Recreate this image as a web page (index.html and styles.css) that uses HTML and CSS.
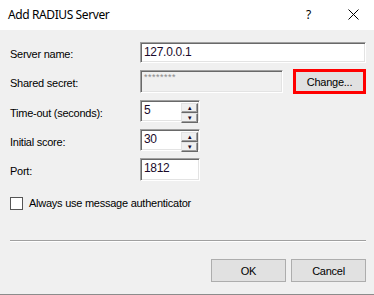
FILE: index.html
```html
<!DOCTYPE html>
<html lang="en">
<head>
    <meta charset="UTF-8">
    <title>Add RADIUS Server</title>
    <link rel="stylesheet" href="styles.css">
</head>
<body>
    <div class="dialog">
        <div class="titlebar">
            <span class="title">Add RADIUS Server</span>
            <span class="help">?</span>
            <span class="close">
                <svg width="11" height="11" viewBox="0 0 11 11">
                    <path d="M0.5 0.5 L10.5 10.5 M10.5 0.5 L0.5 10.5" stroke="#000" stroke-width="1" fill="none"/>
                </svg>
            </span>
        </div>

        <div class="content">
            <div class="row row-name">
                <label class="field-label">Server name:</label>
                <div class="textbox wide">127.0.0.1</div>
            </div>

            <div class="row row-secret">
                <label class="field-label">Shared secret:</label>
                <div class="textbox secret">********</div>
                <button class="btn btn-change">Change...</button>
            </div>

            <div class="row">
                <label class="field-label">Time-out (seconds):</label>
                <div class="textbox spin">
                    <span class="value">5</span>
                    <span class="spin-buttons">
                        <span class="spin-btn">&#9652;</span>
                        <span class="spin-btn">&#9662;</span>
                    </span>
                </div>
            </div>

            <div class="row">
                <label class="field-label">Initial score:</label>
                <div class="textbox spin">
                    <span class="value">30</span>
                    <span class="spin-buttons">
                        <span class="spin-btn">&#9652;</span>
                        <span class="spin-btn">&#9662;</span>
                    </span>
                </div>
            </div>

            <div class="row">
                <label class="field-label">Port:</label>
                <div class="textbox short">1812</div>
            </div>

            <div class="check-row">
                <span class="checkbox"></span>
                <span>Always use message authenticator</span>
            </div>

            <div class="separator"></div>

            <div class="actions">
                <button class="btn">OK</button>
                <button class="btn">Cancel</button>
            </div>
        </div>
    </div>
</body>
</html>
```

FILE: styles.css
```css
body {
    margin: 0;
    padding: 0;
    background: #f0f0f0;
    font-family: "Liberation Sans", Arial, sans-serif;
    font-size: 11px;
    letter-spacing: -0.25px;
    color: #000;
}

.dialog {
    width: 374px;
    height: 295px;
    background: #f0f0f0;
    box-sizing: border-box;
    border-bottom: 1px solid #8c8c8c;
    overflow: hidden;
}

.titlebar {
    height: 30px;
    background: #fff;
    display: flex;
    align-items: center;
    padding-left: 8px;
}

.title {
    font-family: "Noto Sans", "Open Sans", sans-serif;
    font-size: 12px;
    letter-spacing: -0.4px;
    flex: 1;
    padding-bottom: 1px;
}

.help {
    font-family: "Noto Sans", sans-serif;
    font-size: 12px;
    width: 42px;
    padding-bottom: 1px;
}

.close {
    width: 26px;
    display: flex;
    padding-bottom: 1px;
}

.content {
    padding: 12px 8px 0 10px;
}

.row {
    display: flex;
    align-items: center;
    height: 22px;
    margin-bottom: 7px;
}

.row-name {
    height: 21px;
    margin-bottom: 6px;
}

.row-secret {
    height: 25px;
    margin-bottom: 6px;
}

.field-label {
    width: 130px;
    padding-top: 3px;
}

.textbox {
    box-sizing: border-box;
    height: 100%;
    background: #fff;
    border: 1px solid;
    border-color: #a0a0a0 #fff #fff #a0a0a0;
    box-shadow: inset 1px 1px 0 #696969, inset -1px -1px 0 #e3e3e3;
    padding: 2px 3px 0;
    font-size: 12px;
    letter-spacing: -0.3px;
    color: #1a0a2a;
}

.wide {
    width: 226px;
}

.secret {
    width: 143px;
    height: 23px;
    background: #f0f0f0;
    color: #8a8a8a;
    font-size: 9px;
    letter-spacing: 0.5px;
    padding-top: 1px;
}

.short {
    width: 60px;
    height: 23px;
}

.spin {
    width: 60px;
    display: flex;
    justify-content: space-between;
    padding: 2px 1px 2px 3px;
}

.spin-buttons {
    display: flex;
    flex-direction: column;
    width: 17px;
}

.spin-btn {
    flex: 1;
    box-sizing: border-box;
    background: #f0f0f0;
    border: 1px solid;
    border-color: #e3e3e3 #696969 #696969 #e3e3e3;
    box-shadow: inset -1px -1px 0 #a0a0a0;
    font-size: 7px;
    line-height: 8px;
    text-align: center;
}

.btn {
    box-sizing: border-box;
    width: 75px;
    height: 23px;
    background: #e1e1e1;
    border: 1px solid #adadad;
    font-family: "Liberation Sans", Arial, sans-serif;
    font-size: 11px;
    letter-spacing: -0.25px;
    color: #000;
    padding: 0;
}

.btn-change {
    width: 73px;
    height: 25px;
    margin-left: 10px;
    border: 3px solid #ff0000;
}

.check-row {
    display: flex;
    align-items: center;
    gap: 6px;
    margin-top: 16px;
    height: 14px;
}

.checkbox {
    box-sizing: border-box;
    width: 13px;
    height: 13px;
    background: #fff;
    border: 1px solid #555;
}

.separator {
    margin-top: 30px;
    height: 1px;
    background: #a0a0a0;
    border-bottom: 1px solid #fff;
    width: 356px;
}

.actions {
    display: flex;
    justify-content: flex-end;
    gap: 5px;
    margin-top: 17px;
}
```
